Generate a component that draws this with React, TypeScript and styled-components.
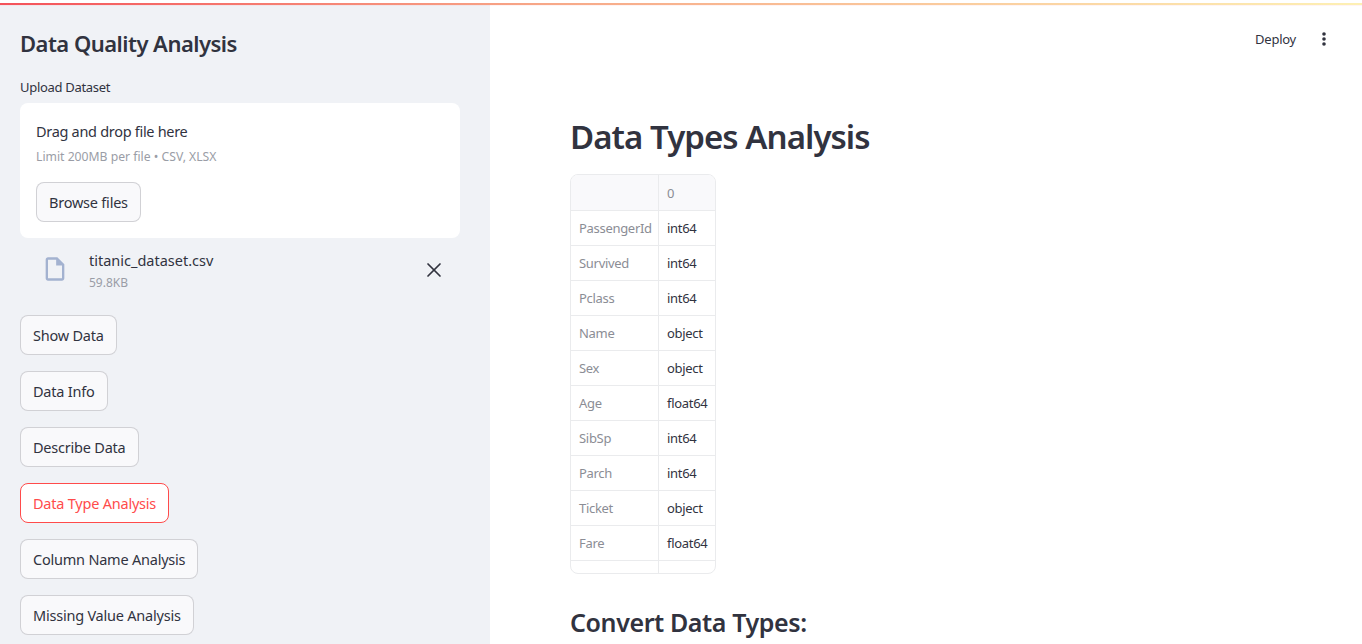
import React from "react";
import styled, { createGlobalStyle } from "styled-components";
import { X } from "lucide-react";

const rows: [string, string][] = [
  ["PassengerId", "int64"],
  ["Survived", "int64"],
  ["Pclass", "int64"],
  ["Name", "object"],
  ["Sex", "object"],
  ["Age", "float64"],
  ["SibSp", "int64"],
  ["Parch", "int64"],
  ["Ticket", "object"],
  ["Fare", "float64"],
];

const actions = [
  "Show Data",
  "Data Info",
  "Describe Data",
  "Data Type Analysis",
  "Column Name Analysis",
  "Missing Value Analysis",
];

const App = () => {
  return (
    <Page>
      <GlobalStyle />
      <TopLine />
      <Sidebar>
        <SideTitle>Data Quality Analysis</SideTitle>
        <UploadLabel>Upload Dataset</UploadLabel>
        <DropZone>
          <DropTitle>Drag and drop file here</DropTitle>
          <DropHint>Limit 200MB per file • CSV, XLSX</DropHint>
          <Button>Browse files</Button>
        </DropZone>
        <FileRow>
          <FileIcon width="28" height="28" viewBox="0 0 24 24" fill="#a3b2d0">
            <path d="M14 2H6c-1.1 0-2 .9-2 2v16c0 1.1.9 2 2 2h12c1.1 0 2-.9 2-2V8l-6-6zm4 18H6V4h7v5h5v11z" />
          </FileIcon>
          <FileInfo>
            <FileName>titanic_dataset.csv</FileName>
            <FileSize>59.8KB</FileSize>
          </FileInfo>
          <RemoveIcon>
            <X size={24} strokeWidth={1.7} />
          </RemoveIcon>
        </FileRow>
        <Actions>
          {actions.map((a) => (
            <Button key={a} $active={a === "Data Type Analysis"}>
              {a}
            </Button>
          ))}
        </Actions>
      </Sidebar>
      <Main>
        <Toolbar>
          <DeployText>Deploy</DeployText>
          <svg width="24" height="24" viewBox="0 0 24 24" fill="#31333f">
            <circle cx="12" cy="7" r="1.8" />
            <circle cx="12" cy="12" r="1.8" />
            <circle cx="12" cy="17" r="1.8" />
          </svg>
        </Toolbar>
        <Content>
          <Heading>Data Types Analysis</Heading>
          <Table>
            <HeadCell />
            <HeadCell $last>0</HeadCell>
            {rows.map(([name, type]) => (
              <React.Fragment key={name}>
                <IndexCell>{name}</IndexCell>
                <ValueCell>{type}</ValueCell>
              </React.Fragment>
            ))}
            <StubCell />
            <StubCell $last />
          </Table>
          <SubHeading>Convert Data Types:</SubHeading>
        </Content>
      </Main>
    </Page>
  );
};

const GlobalStyle = createGlobalStyle`
  html, body {
    margin: 0;
    padding: 0;
    height: 100%;
    overflow: hidden;
    background: #fff;
  }
  body {
    font-family: "Noto Sans", "Liberation Sans", sans-serif;
    color: #31333f;
  }
`;

const Page = styled.div`
  position: relative;
  display: flex;
  height: 644px;
  width: 1362px;
  overflow: hidden;
`;

const TopLine = styled.div`
  position: absolute;
  top: 0;
  left: 0;
  right: 0;
  height: 2px;
  border-top: 3px solid #fff;
  background: linear-gradient(90deg, #f4525a, #f7a888 40%, #fdf0b4);
  box-shadow: 0 0 1px rgba(255, 75, 75, 0.35);
`;

const Sidebar = styled.aside`
  width: 490px;
  flex-shrink: 0;
  box-sizing: border-box;
  padding: 27px 30px 0 20px;
  background: #f0f2f6;
  overflow: hidden;
`;

const SideTitle = styled.h2`
  margin: 0 0 18px;
  font-size: 22px;
  line-height: 32px;
  font-weight: 600;
  letter-spacing: -0.52px;
`;

const UploadLabel = styled.div`
  font-size: 13px;
  line-height: 20px;
  margin-bottom: 6px;
  letter-spacing: -0.3px;
`;

const DropZone = styled.div`
  box-sizing: border-box;
  height: 135px;
  padding: 16px;
  background: #fff;
  border-radius: 8px;
`;

const DropTitle = styled.div`
  font-size: 14.5px;
  line-height: 24px;
  letter-spacing: -0.3px;
`;

const DropHint = styled.div`
  font-size: 12.2px;
  line-height: 20px;
  margin: 4px 0 15px;
  color: #9a9da6;
`;

const Button = styled.button<{ $active?: boolean }>`
  display: block;
  box-sizing: border-box;
  height: 40px;
  padding: 0 12px;
  border-radius: 8px;
  border: 1px solid ${(p) => (p.$active ? "#ff4b4b" : "rgba(49, 51, 63, 0.2)")};
  background: ${(p) => (p.$active ? "#fff" : "#f9f9fb")};
  color: ${(p) => (p.$active ? "#ff4b4b" : "#31333f")};
  font-family: inherit;
  font-size: 14.5px;
  letter-spacing: -0.22px;
`;

const FileRow = styled.div`
  display: flex;
  align-items: center;
  height: 46px;
  margin-top: 10px;
  padding-left: 21px;
`;

const FileIcon = styled.svg`
  margin-top: -5px;
`;

const FileInfo = styled.div`
  flex: 1;
  margin-left: 20px;
`;

const FileName = styled.div`
  font-size: 14.5px;
  line-height: 24px;
`;

const FileSize = styled.div`
  font-size: 12px;
  line-height: 22px;
  color: #9a9da6;
`;

const RemoveIcon = styled.span`
  display: flex;
  margin: 0 14px 2px 0;
  color: #31333f;
`;

const Actions = styled.div`
  display: flex;
  flex-direction: column;
  align-items: flex-start;
  gap: 16px;
  margin-top: 21px;
`;

const Main = styled.main`
  flex: 1;
  min-width: 0;
`;

const Toolbar = styled.div`
  display: flex;
  justify-content: flex-end;
  align-items: center;
  gap: 16px;
  height: 24px;
  padding: 27px 26px 0 0;
`;

const DeployText = styled.span`
  font-size: 13px;
  letter-spacing: -0.25px;
`;

const Content = styled.div`
  padding: 62px 80px 0;
`;

const Heading = styled.h1`
  margin: 0 0 13px;
  font-size: 33px;
  line-height: 48px;
  font-weight: 600;
  letter-spacing: -0.95px;
`;

const Table = styled.div`
  display: grid;
  grid-template-columns: 88px 57px;
  grid-template-rows: 36px;
  grid-auto-rows: 35px;
  width: 146px;
  height: 400px;
  box-sizing: border-box;
  border: 1px solid #eaebed;
  border-radius: 8px;
  overflow: hidden;
  font-size: 13px;
  letter-spacing: -0.3px;
`;

const Cell = styled.div<{ $last?: boolean }>`
  display: flex;
  align-items: center;
  box-sizing: border-box;
  padding: 0 8px;
  border-bottom: 1px solid #eaebed;
  border-right: ${(p) => (p.$last ? "none" : "1px solid #eaebed")};
  white-space: nowrap;
`;

const HeadCell = styled(Cell)`
  background: #f9f9fb;
  color: #8b8d95;
`;

const IndexCell = styled(Cell)`
  color: #8b8d95;
`;

const ValueCell = styled(Cell).attrs({ $last: true })`
  color: #31333f;
`;

const StubCell = styled(Cell)`
  border-bottom: none;
`;

const SubHeading = styled.h2`
  margin: 30px 0 0;
  font-size: 25px;
  line-height: 36px;
  font-weight: 600;
  letter-spacing: -0.4px;
`;

export default App;
